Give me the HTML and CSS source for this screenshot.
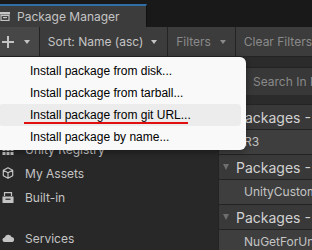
FILE: index.html
```html
<!DOCTYPE html>
<html lang="en">
<head>
    <meta charset="UTF-8">
    <meta name="viewport" content="width=device-width, initial-scale=1.0">
    <title>Package Manager</title>
    <link rel="stylesheet" href="styles.css">
</head>
<body>
    <div class="window">
        <div class="titlebar">
            <div class="tab">
                <svg class="tab-icon" width="10" height="9" viewBox="0 0 10 9">
                    <rect x="0" y="0" width="10" height="2.5" fill="#c4c4c4"/>
                    <rect x="1" y="3.5" width="8" height="5" fill="none" stroke="#c4c4c4" stroke-width="1.2"/>
                    <rect x="3" y="5" width="4" height="1.2" fill="#c4c4c4"/>
                </svg>
                <span>Package Manager</span>
            </div>
        </div>

        <div class="toolbar">
            <div class="tb-btn add">
                <svg width="12" height="12" viewBox="0 0 12 12">
                    <path d="M6 0v12M0 6h12" stroke="#c4c4c4" stroke-width="2"/>
                </svg>
                <span class="caret"></span>
            </div>
            <div class="tb-btn sort">
                <span>Sort: Name (asc)</span>
                <span class="caret"></span>
            </div>
            <div class="tb-btn filters">
                <span>Filters</span>
                <span class="caret dim"></span>
            </div>
            <div class="tb-btn clear">
                <span>Clear Filters</span>
            </div>
        </div>

        <div class="main">
            <div class="sidebar">
                <div class="side-item"><span class="side-icon"></span>In Project</div>
                <div class="side-item"><span class="side-icon"></span>Updates</div>
                <div class="side-item">
                    <svg class="side-icon" width="11" height="11" viewBox="0 0 11 11">
                        <g fill="#c4c4c4">
                            <rect x="0" y="0" width="3" height="3"/><rect x="4" y="0" width="3" height="3"/><rect x="8" y="0" width="3" height="3"/>
                            <rect x="0" y="4" width="3" height="3"/><rect x="4" y="4" width="3" height="3"/><rect x="8" y="4" width="3" height="3"/>
                            <rect x="0" y="8" width="3" height="3"/><rect x="4" y="8" width="3" height="3"/><rect x="8" y="8" width="3" height="3"/>
                        </g>
                    </svg>
                    Unity Registry
                </div>
                <div class="side-item">
                    <svg class="side-icon" width="11" height="12" viewBox="0 0 11 12">
                        <path d="M5.5 0.8 L10.2 3.3 V8.7 L5.5 11.2 L0.8 8.7 V3.3 Z M0.8 3.3 L5.5 5.8 L10.2 3.3 M5.5 5.8 V11.2" fill="none" stroke="#c4c4c4" stroke-width="1.2" stroke-linejoin="round"/>
                    </svg>
                    My Assets
                </div>
                <div class="side-item">
                    <svg class="side-icon" width="11" height="11" viewBox="0 0 11 11">
                        <path d="M2 4 V0.6 H9 V4" fill="none" stroke="#c4c4c4" stroke-width="1.2"/>
                        <rect x="0" y="4.5" width="11" height="6.5" fill="#c4c4c4"/>
                        <rect x="3" y="6.6" width="5" height="1.2" fill="#282828"/>
                    </svg>
                    Built-in
                </div>
                <div class="side-item services">
                    <svg class="side-icon" width="12" height="8" viewBox="0 0 12 8">
                        <path d="M3 8 H9.5 A2.5 2.5 0 0 0 9.6 3 A3.8 3.8 0 0 0 2.6 3.4 A2.3 2.3 0 0 0 3 8 Z" fill="#c4c4c4"/>
                    </svg>
                    Services
                </div>
            </div>

            <div class="list">
                <div class="list-top"></div>
                <div class="search">Search In Project</div>
                <div class="group-head"><span class="tri"></span>Packages - Cysharp</div>
                <div class="row">R3</div>
                <div class="group-head"><span class="tri"></span>Packages - Keijiro</div>
                <div class="row">UnityCustomPackages</div>
                <div class="group-head"><span class="tri"></span>Packages - NuGet</div>
                <div class="row">NuGetForUnity</div>
            </div>
        </div>

        <div class="menu">
            <div class="menu-item">Install package from disk...</div>
            <div class="menu-item">Install package from tarball...</div>
            <div class="menu-item active">Install package from git URL...</div>
            <div class="menu-item">Install package by name...</div>
        </div>
        <div class="mark"></div>
    </div>
</body>
</html>
```
FILE: styles.css
```css
body {
    margin: 0;
    background-color: #282828;
    font-family: Inter, "Noto Sans", sans-serif;
    overflow: hidden;
}

.window {
    position: relative;
    width: 312px;
    height: 250px;
    overflow: hidden;
    display: flex;
    flex-direction: column;
}

.titlebar {
    height: 27px;
    background-color: #191919;
    display: flex;
    align-items: flex-end;
    flex-shrink: 0;
}

.tab {
    width: 146px;
    height: 21px;
    border-top: 2px solid #2f6ea6;
    border-right: 1px solid #111;
    background-color: #3c3c3c;
    display: flex;
    align-items: center;
    color: #c4c4c4;
    font-size: 12px;
}

.tab-icon {
    margin: 0 7px 0 0;
}

.toolbar {
    height: 29px;
    background-color: #3c3c3c;
    border-bottom: 1px solid #232323;
    display: flex;
    flex-shrink: 0;
    font-size: 12px;
    color: #c4c4c4;
}

.tb-btn {
    display: flex;
    align-items: center;
    border-right: 1px solid #232323;
    white-space: nowrap;
    box-sizing: border-box;
}

.add {
    width: 40px;
    background-color: #474747;
    padding-left: 2px;
}

.add .caret {
    margin-left: 10px;
}

.sort {
    width: 129px;
    padding-left: 8px;
}

.sort .caret {
    margin-left: 8px;
}

.filters {
    width: 68px;
    padding-left: 8px;
    color: #8a8a8a;
}

.filters .caret {
    margin-left: 9px;
}

.clear {
    padding-left: 8px;
    color: #8a8a8a;
    border-right: none;
}

.caret {
    width: 0;
    height: 0;
    border-left: 3.5px solid transparent;
    border-right: 3.5px solid transparent;
    border-top: 4px solid #c4c4c4;
}

.caret.dim {
    border-top-color: #8a8a8a;
}

.main {
    flex: 1;
    display: flex;
}

.sidebar {
    width: 218px;
    padding-top: 32px;
    box-sizing: border-box;
    color: #c4c4c4;
    font-size: 12px;
}

.side-item {
    height: 24px;
    display: flex;
    align-items: center;
    padding-left: 2px;
}

.side-icon {
    width: 12px;
    margin-right: 11px;
    flex-shrink: 0;
}

.services {
    margin-top: 17px;
}

.list {
    flex: 1;
    border-left: 1px solid #232323;
    background-color: #2b2b2b;
    white-space: nowrap;
    overflow: hidden;
}

.list-top {
    height: 10px;
    border-bottom: 1px solid #232323;
}

.search {
    height: 27px;
    background-color: #383838;
    color: #8a8a8a;
    font-size: 12px;
    line-height: 27px;
    padding-left: 34px;
}

.group-head {
    height: 24px;
    margin-top: 9px;
    background-color: #393939;
    border-top: 1px solid #232323;
    border-bottom: 1px solid #232323;
    display: flex;
    align-items: center;
    color: #d2d2d2;
    font-size: 14px;
}

.group-head + .row + .group-head {
    margin-top: 0;
    border-top: none;
}

.tri {
    width: 0;
    height: 0;
    margin: 0 7px 0 4px;
    border-left: 3.5px solid transparent;
    border-right: 3.5px solid transparent;
    border-top: 6px solid #6e6e6e;
}

.row {
    height: 24px;
    background-color: #3e3e3e;
    border-bottom: 1px solid #232323;
    line-height: 24px;
    padding-left: 25px;
    color: #c4c4c4;
    font-size: 12px;
}

.menu {
    position: absolute;
    left: -6px;
    top: 57px;
    width: 242px;
    padding: 3px 5px 2px 5px;
    background-color: #f9f9f9;
    border-radius: 0 6px 6px 0;
    box-shadow: 0 2px 6px rgba(0, 0, 0, 0.35);
    font-family: "Liberation Sans", Arial, sans-serif;
    font-size: 12px;
    color: #000;
}

.menu-item {
    height: 22px;
    line-height: 22px;
    padding-left: 31px;
    border-radius: 4px;
}

.menu-item.active {
    background-color: #ececec;
}

.mark {
    position: absolute;
    left: 24px;
    top: 122px;
    width: 164px;
    height: 2px;
    background-color: #e01010;
}
```
